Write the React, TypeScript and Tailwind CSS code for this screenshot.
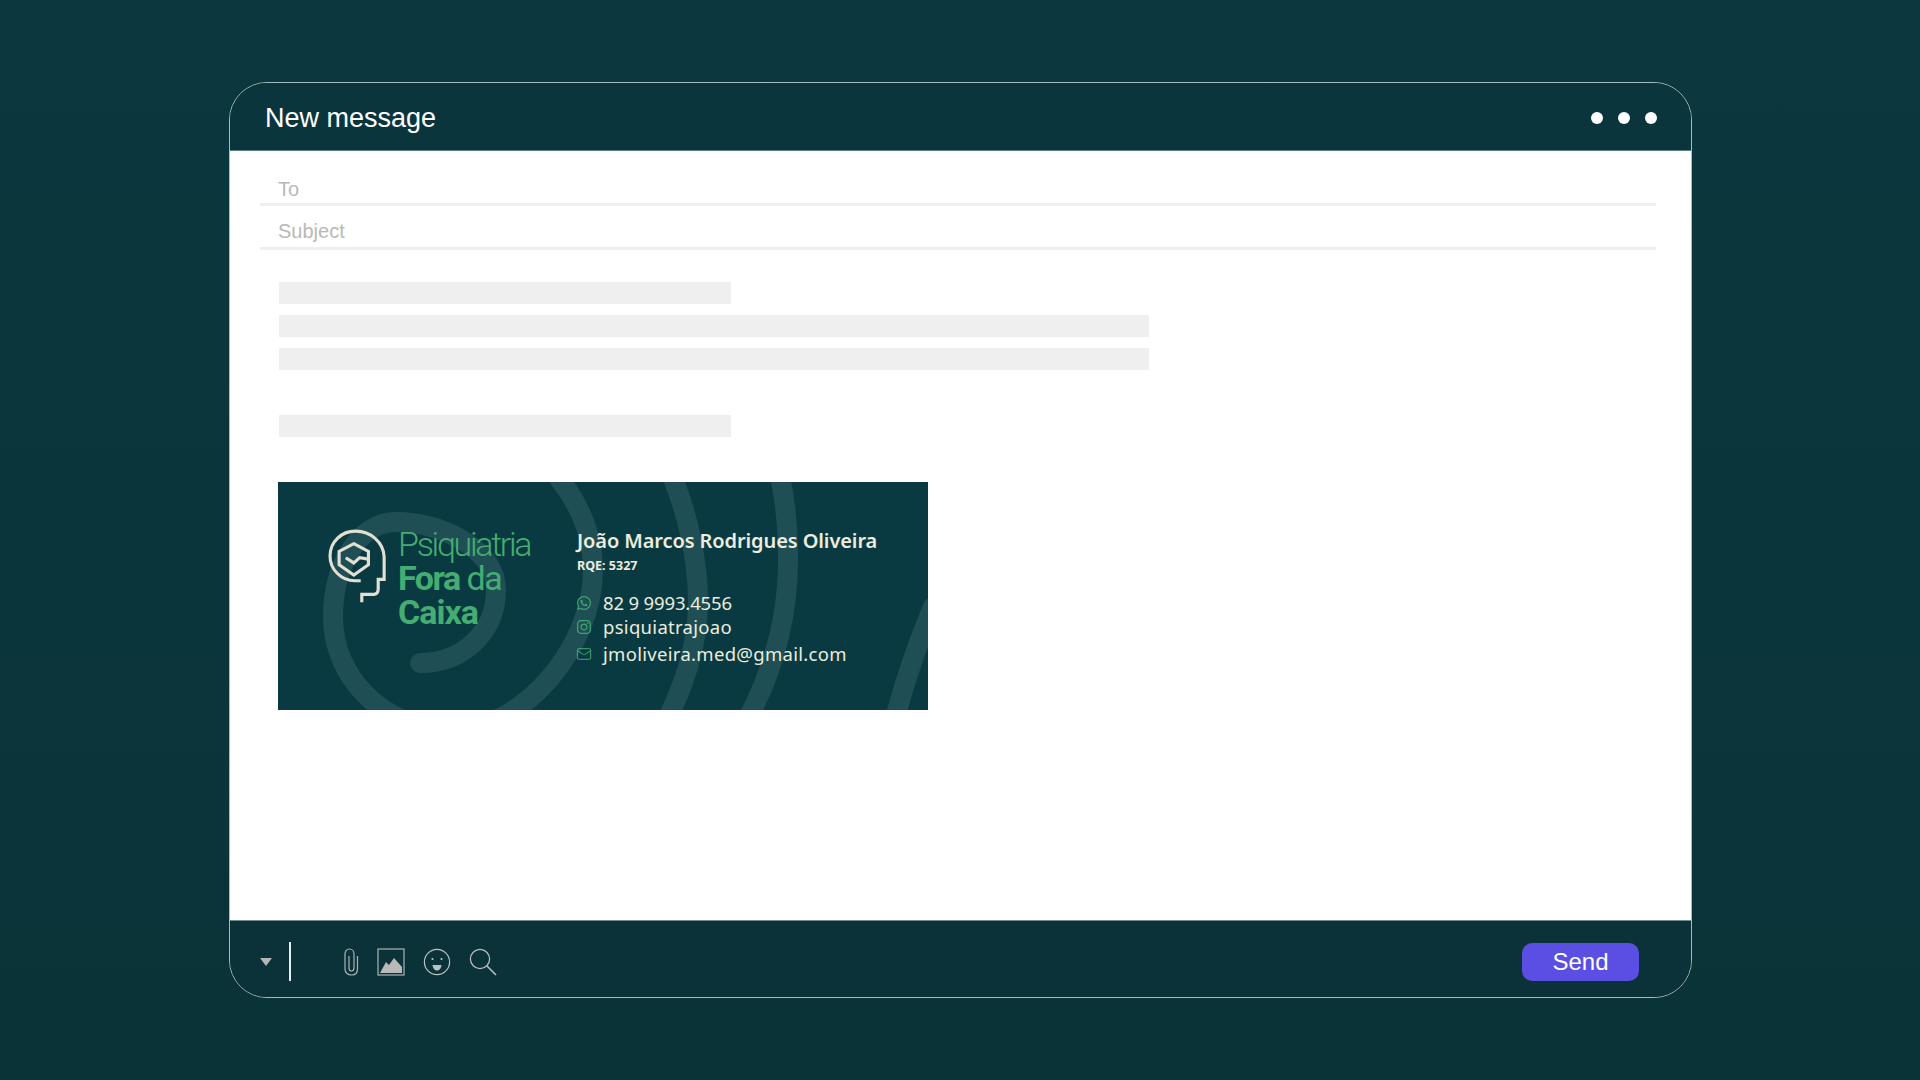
import { Mail } from "lucide-react";
import { FaWhatsapp, FaInstagram } from "react-icons/fa";

const bars = ["w-[452px]", "w-[870px]", "w-[870px]"];

const HeadLogo = () => (
  <svg viewBox="0 0 240 255" className="w-[84px] h-[89px] shrink-0" fill="none" stroke="#e2dfd3" strokeWidth="9">
    <path d="M128 236V213H162Q175 213 175 198V170H192V105A82 76 0 0 0 110 32A72 71 0 1 0 108 174H125" />
    <path d="M105 68L147 90V128L105 158L63 128V90Z" />
    <path d="M82 108L105 123L122 108L147 112" />
  </svg>
);

const Swirls = () => (
  <svg viewBox="0 0 650 228" className="absolute inset-0 w-[650px] h-[228px]" fill="none" stroke="#1f4f54" strokeWidth="20" strokeLinecap="round">
    <path d="M142 181C185 181 218 150 218 108C218 68 165 40 118 40C80 40 55 85 55 135C55 195 105 248 175 248C245 248 315 165 315 88C315 50 300 20 280 -5" />
    <path d="M392 -10C410 30 420 80 420 120C420 165 405 205 388 240" />
    <path d="M501 -10C508 20 510 50 510 78C510 135 495 190 468 240" />
    <path d="M655 125C640 160 628 195 616 240" />
  </svg>
);

const Signature = () => (
  <div className="relative w-[650px] h-[228px] mt-[45px] ml-[18px] bg-[#0a3a41] overflow-hidden flex">
    <Swirls />
    <div className="relative flex pl-[39px] pt-[38px] w-[299px] shrink-0">
      <HeadLogo />
      <div className="ml-[-3px] mt-[7px] font-['Roboto',sans-serif] text-[#45ad72] text-[34px] leading-[34px]">
        <div className="font-light tracking-[-2.3px]">Psiquiatria</div>
        <div className="tracking-[-1.5px]">
          <span className="font-bold">Fora</span> <span className="font-normal">da</span>
        </div>
        <div className="font-bold tracking-[-1px]">Caixa</div>
      </div>
    </div>
    <div className="relative pt-[46px] font-['Noto_Sans',sans-serif] text-[#ececdf]">
      <div className="text-[20px] leading-[26px] font-semibold tracking-[-0.1px] whitespace-nowrap">João Marcos Rodrigues Oliveira</div>
      <div className="text-[12.5px] leading-[16px] font-bold mt-[4px]">RQE: 5327</div>
      <div className="mt-[17px] text-[18.5px] leading-[24px] tracking-[0.3px]">
        <div className="flex items-center gap-[11px] ml-[-1px]">
          <FaWhatsapp className="w-[16px] h-[16px] text-[#3fa66f]" />
          <span className="tracking-[-0.15px]">82 9 9993.4556</span>
        </div>
        <div className="flex items-center gap-[11px] ml-[-1px]">
          <FaInstagram className="w-[16px] h-[16px] text-[#3fa66f]" />
          <span>psiquiatrajoao</span>
        </div>
        <div className="flex items-center gap-[11px] ml-[-1px] mt-[3px]">
          <Mail className="w-[16px] h-[16px] text-[#3fa66f]" strokeWidth={1.5} />
          <span>jmoliveira.med@gmail.com</span>
        </div>
      </div>
    </div>
  </div>
);

const Toolbar = () => (
  <div className="flex items-center">
    <div className="w-0 h-0 ml-[30px] border-l-[6px] border-r-[6px] border-t-[8px] border-l-transparent border-r-transparent border-t-[#b5b5b5]" />
    <div className="w-[2px] h-[39px] bg-[#e6eeee] ml-[17px]" />
    <svg viewBox="0 0 16 28" className="w-[16px] h-[28px] ml-[52px]" fill="none" stroke="#a9b6b6" strokeWidth="1.2">
      <path d="M14.5 8V21C14.5 25 12 27 8.5 27C5 27 2 25 2 21V6C2 3 4 1 6.5 1C9 1 11 3 11 6V20C11 22 10 23 8.5 23C7 23 6 22 6 20V8" />
    </svg>
    <svg viewBox="0 0 28 28" className="w-[28px] h-[28px] ml-[18px]" fill="none">
      <rect x="1" y="1" width="26" height="26" stroke="#a9b6b6" strokeWidth="1.2" />
      <path d="M3 25L9 14L12 17L17 10L25 19V25Z" fill="#b9b9b9" />
    </svg>
    <svg viewBox="0 0 28 28" className="w-[28px] h-[28px] ml-[18px]" fill="none">
      <circle cx="14" cy="14" r="12.6" stroke="#b9c2c2" strokeWidth="1.2" />
      <circle cx="9.5" cy="11" r="1.1" fill="#b9c2c2" />
      <circle cx="18.5" cy="11" r="1.1" fill="#b9c2c2" />
      <path d="M9.5 17H18.5C18 21 16 22.5 14 22.5C12 22.5 10 21 9.5 17Z" fill="#b9c2c2" />
    </svg>
    <svg viewBox="0 0 28 28" className="w-[28px] h-[28px] ml-[18px]" fill="none" stroke="#b9c2c2">
      <circle cx="11" cy="11" r="9.6" strokeWidth="1.2" />
      <path d="M18 18L27 27" strokeWidth="1.6" />
    </svg>
  </div>
);

export default function App() {
  return (
    <div className="w-full h-[1080px] overflow-hidden pt-[82px] pl-[229px] bg-gradient-to-b from-[#0a383e] to-[#0a3338] font-['Liberation_Sans',sans-serif]">
      <div className="w-[1463px] h-[916px] rounded-[38px] border border-[#a8bcbc] overflow-hidden flex flex-col">
        <div className="h-[68px] shrink-0 flex items-center justify-between pl-[35px] pr-[34px] pt-[2px] bg-[#0b353c] border-b border-[#5d8084]">
          <div className="text-[27px] text-white pt-[2px]">New message</div>
          <div className="flex gap-[15px]">
            <div className="w-[12px] h-[12px] rounded-full bg-white" />
            <div className="w-[12px] h-[12px] rounded-full bg-white" />
            <div className="w-[12px] h-[12px] rounded-full bg-white" />
          </div>
        </div>
        <div className="flex-1 bg-white">
          <div className="mx-[30px] mr-[35px]">
            <div className="h-[55px] flex items-end pl-[18px] border-b-[3px] border-[#efefef] text-[20px] leading-[28px] text-[#b8b8b8]">To</div>
            <div className="h-[44px] flex items-end pl-[18px] pb-[1px] border-b-[3px] border-[#efefef] text-[20px] text-[#b8b8b8]">Subject</div>
          </div>
          <div className="mt-[32px] ml-[49px] flex flex-col gap-[11px]">
            {bars.map((w, i) => (
              <div key={i} className={`${w} h-[22px] bg-[#efefef]`} />
            ))}
            <div className="w-[452px] h-[22px] bg-[#efefef] mt-[34px]" />
          </div>
          <div className="ml-[30px]">
            <Signature />
          </div>
        </div>
        <div className="h-[77px] shrink-0 flex items-center justify-between pr-[52px] pt-[5px] bg-[#0b3238] border-t border-[#6f8d90]">
          <Toolbar />
          <button className="w-[117px] h-[38px] rounded-[10px] bg-[#5b4fe3] text-[24px] text-white">Send</button>
        </div>
      </div>
    </div>
  );
}
